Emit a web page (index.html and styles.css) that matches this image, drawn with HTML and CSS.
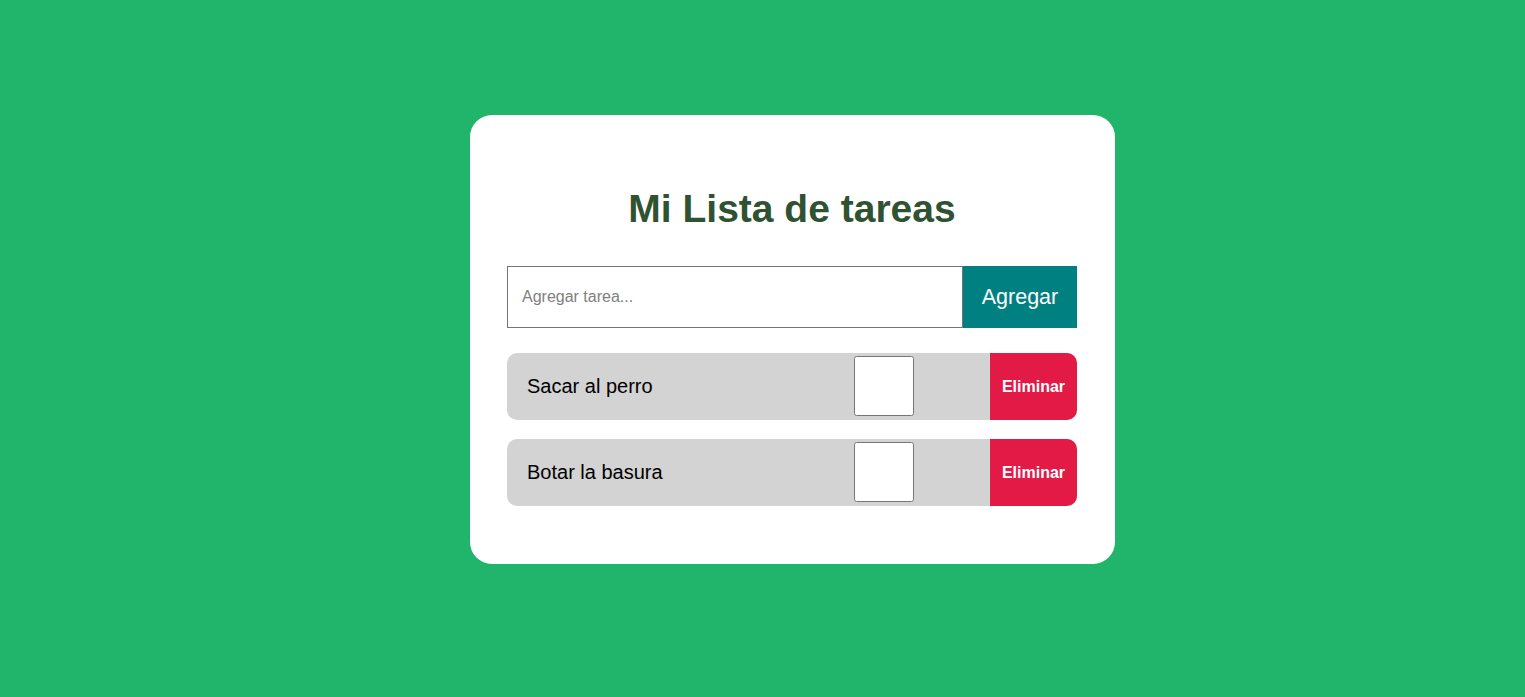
FILE: index.html
```html
<!DOCTYPE html>
<html lang="es">
<head>
<meta charset="utf-8">
<title>Mi Lista de tareas</title>
<link rel="stylesheet" href="styles.css">
</head>
<body>
<div class="card">
  <h1 class="title">Mi Lista de tareas</h1>
  <div class="form">
    <input class="task-input" type="text" placeholder="Agregar tarea...">
    <button class="add-btn">Agregar</button>
  </div>
  <ul class="list">
    <li class="item">
      <span class="item-text">Sacar al perro</span>
      <input class="item-check" type="checkbox">
      <button class="del-btn">Eliminar</button>
    </li>
    <li class="item">
      <span class="item-text">Botar la basura</span>
      <input class="item-check" type="checkbox">
      <button class="del-btn">Eliminar</button>
    </li>
  </ul>
</div>
</body>
</html>
```

FILE: styles.css
```css
html, body {
  margin: 0;
  padding: 0;
}
body {
  background: #21b46b;
  font-family: "Liberation Sans", Arial, sans-serif;
  min-height: 697px;
  padding-top: 115px;
  box-sizing: border-box;
}
.card {
  width: 570px;
  margin-left: 470px;
  padding: 71px 38px 58px 37px;
  background: #ffffff;
  border-radius: 22px;
}
.title {
  margin: 0 0 35px 0;
  font-size: 39px;
  line-height: 45px;
  font-weight: bold;
  text-align: center;
  color: #2f5233;
}
.form {
  display: flex;
  height: 62px;
}
.task-input {
  flex: 1;
  box-sizing: border-box;
  height: 62px;
  margin: 0;
  padding: 0 14px;
  border: 1px solid #767676;
  border-radius: 0;
  font-family: "Liberation Sans", Arial, sans-serif;
  font-size: 16px;
  outline: none;
}
.task-input::placeholder {
  color: #808080;
}
.add-btn {
  width: 114px;
  height: 62px;
  margin: 0;
  border: none;
  background: #008080;
  color: #ffffff;
  font-family: "Liberation Sans", Arial, sans-serif;
  font-size: 21.5px;
  padding: 0;
}
.list {
  list-style: none;
  margin: 25px 0 0 0;
  padding: 0;
  display: flex;
  flex-direction: column;
  gap: 19px;
}
.item {
  display: flex;
  align-items: center;
  height: 67px;
  background: #d3d3d3;
  border-radius: 10px;
  overflow: hidden;
}
.item-text {
  flex: 1;
  padding-left: 20px;
  font-size: 20px;
  color: #000000;
}
.item-check {
  width: 60px;
  height: 60px;
  margin: -1px 76px 0 0;
}
.del-btn {
  align-self: stretch;
  width: 87px;
  margin: 0;
  padding: 0;
  border: none;
  background: #e31946;
  color: #ffffff;
  font-family: "Liberation Sans", Arial, sans-serif;
  font-size: 16px;
  font-weight: bold;
}
```
